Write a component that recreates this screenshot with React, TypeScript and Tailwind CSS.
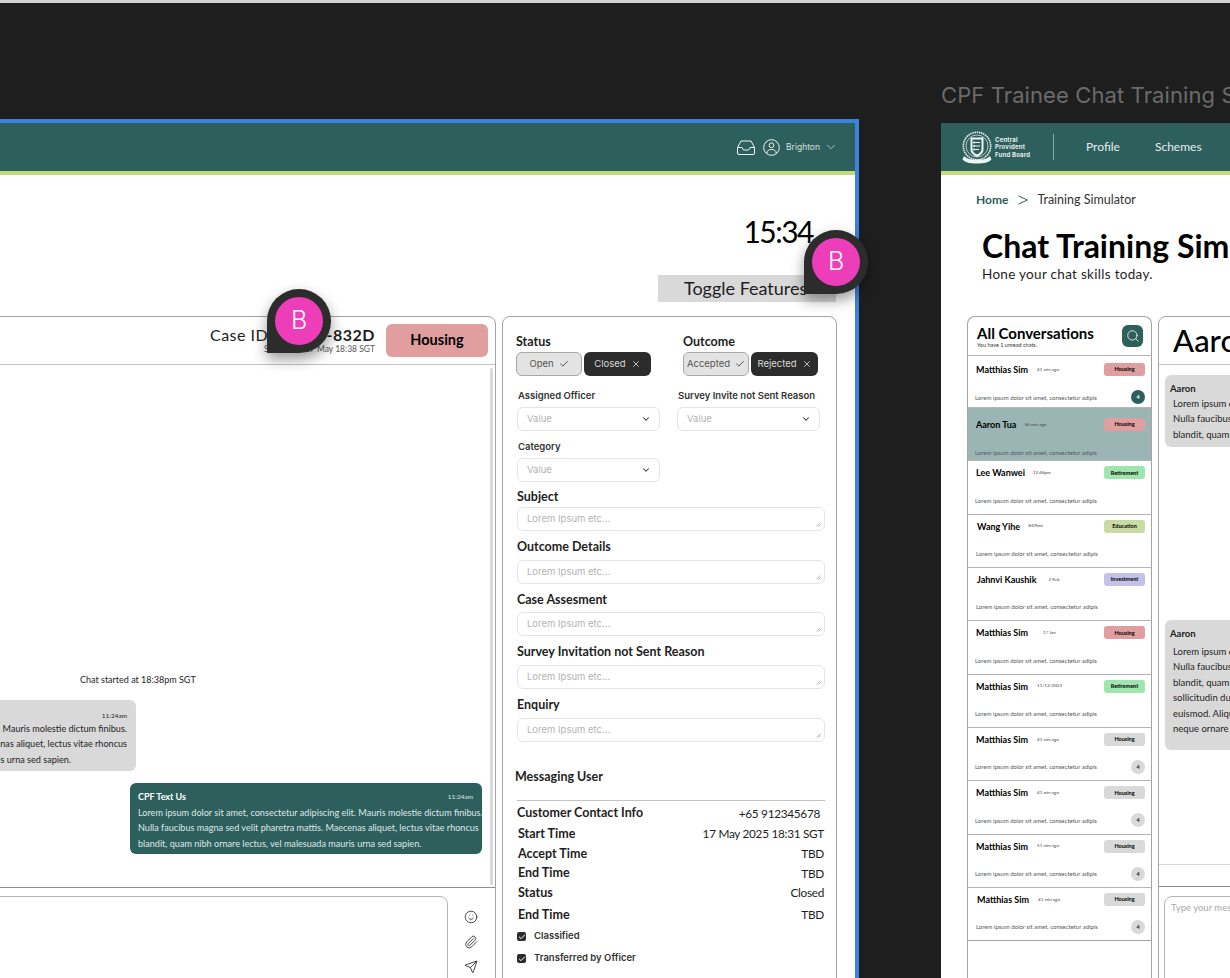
import { Check, ChevronDown, Paperclip, Search, Send, Smile, X } from "lucide-react";

const outfit = "font-['Lato','Inter',sans-serif]";
const inter = "font-['Inter',sans-serif]";

const lorem = "Lorem ipsum dolor sit amet, consectetur adipis";

const conversations = [
  { name: "Matthias Sim", time: "41 min ago", tag: "Housing", tagClass: "bg-[#e09e9e]", badge: "dark", gap: "ml-[9px]", row: "h-[52px] pt-[7px]" },
  { name: "Aaron Tua", time: "56 min ago", tag: "Housing", tagClass: "bg-[#e09e9e]", selected: true, gap: "ml-2", row: "h-[53.33px] pt-[10px]" },
  { name: "Lee Wanwei", time: "12:46pm", tag: "Retirement", tagClass: "bg-[#9ee6ae]", gap: "ml-2", row: "h-[53.33px] pt-[5px]" },
  { name: "Wang Yihe", time: "8:09am", tag: "Education", tagClass: "bg-[#c8dba3]", shift: true, gap: "ml-2", row: "h-[53.33px] pt-[5px]" },
  { name: "Jahnvi Kaushik", time: "2 Feb", tag: "Investment", tagClass: "bg-[#c3c0e9]", shift: true, gap: "ml-3", row: "h-[53.33px] pt-[5px]" },
  { name: "Matthias Sim", time: "17 Jan", tag: "Housing", tagClass: "bg-[#e09e9e]", gap: "ml-[15px]", row: "h-[53.33px] pt-[5px]" },
  { name: "Matthias Sim", time: "11/12/2023", tag: "Retirement", tagClass: "bg-[#9ee6ae]", gap: "ml-[9px]", row: "h-[53.33px] pt-[5px]" },
  { name: "Matthias Sim", time: "41 min ago", tag: "Housing", tagClass: "bg-[#d9d9d9]", badge: "gray", gap: "ml-[9px]", row: "h-[53.33px] pt-[5px]" },
  { name: "Matthias Sim", time: "41 min ago", tag: "Housing", tagClass: "bg-[#d9d9d9]", badge: "gray", gap: "ml-[9px]", row: "h-[53.33px] pt-[5px]" },
  { name: "Matthias Sim", time: "51 min ago", tag: "Housing", tagClass: "bg-[#d9d9d9]", badge: "gray", gap: "ml-[9px]", row: "h-[53.33px] pt-[5px]" },
  { name: "Matthias Sim", time: "41 min ago", tag: "Housing", tagClass: "bg-[#d9d9d9]", badge: "gray", shift: true, gap: "ml-[9px]", row: "h-[53.33px] pt-[5px]" },
];

const infoRows = [
  { label: "Start Time", value: "17 May 2025 18:31 SGT", h: "mt-px h-5" },
  { label: "Accept Time", value: "TBD", h: "h-5" },
  { label: "End Time", value: "TBD", h: "h-[19px]" },
  { label: "Status", value: "Closed", h: "h-5" },
  { label: "End Time", value: "TBD", h: "h-6" },
];

function Cursor({ className }: { className: string }) {
  return (
    <div className={`absolute z-10 flex h-16 w-16 items-center justify-center rounded-full rounded-bl-none bg-[#2c2c2c] shadow-[0_6px_14px_rgba(0,0,0,0.4)] ${className}`}>
      <div className={`flex h-12 w-12 items-center justify-center rounded-full bg-[#ee3db8] text-[25px] font-light text-white ${inter}`}>B</div>
    </div>
  );
}

function Inbox() {
  return (
    <svg width="18" height="15" viewBox="0 0 18 15" fill="none" stroke="#f2f6f5" strokeWidth="1">
      <path d="M4 1h10l3.500 6.500V13a1.500 1.500 0 0 1-1.500 1.500H2A1.500 1.500 0 0 1 .5 13V7.500z" />
      <path d="M.5 7.500h4.500l1.500 2.500h5l1.500-2.500h4.500" />
    </svg>
  );
}

function UserCircle() {
  return (
    <svg width="17" height="17" viewBox="0 0 17 17" fill="none" stroke="#f2f6f5" strokeWidth="1">
      <circle cx="8.500" cy="8.500" r="7.800" />
      <circle cx="8.500" cy="6.300" r="2.400" />
      <path d="M3.800 14.200c.2-2.600 1.900-3.700 4.700-3.700s4.500 1.100 4.700 3.700" />
    </svg>
  );
}

function Logo() {
  return (
    <svg width="30" height="33" viewBox="0 0 30 33" fill="none" stroke="#eef4f3">
      <circle cx="15" cy="15" r="13.700" strokeWidth="1.600" strokeDasharray="1.500 0.700" />
      <circle cx="15" cy="15" r="11" strokeWidth="0.700" />
      <path d="M8.500 6.500h13v12c0 4-3.500 6-6.500 7.500-3-1.500-6.500-3.500-6.500-7.500z" fill="#eef4f3" stroke="none" />
      <path d="M10.500 8.500h9v9.500c0 3-2.500 4.500-4.500 5.500-2-1-4.500-2.500-4.500-5.500z" fill="#2d5f5d" stroke="none" />
      <path d="M12 11.500h6M12 15h6M12 18.500h5" stroke="#eef4f3" strokeWidth="1" />
      <circle cx="12" cy="11.500" r="1" fill="#eef4f3" stroke="none" />
      <circle cx="12" cy="15" r="1" fill="#eef4f3" stroke="none" />
      <circle cx="12" cy="18.500" r="1" fill="#eef4f3" stroke="none" />
      <path d="M2 25c3 3 6 3.500 13 3.500S25 28 28 25l1.500 3.500c-3 3-7 4-14.500 4s-11.500-1-14.500-4z" fill="#eef4f3" stroke="none" />
    </svg>
  );
}

function Chip({ label, dark }: { label: string; dark?: boolean }) {
  return (
    <div className={`flex h-6 items-center justify-center gap-[5px] rounded-md text-[9.5px] ${inter} ${dark ? "w-[67px] bg-[#2c2c2c] text-[#d9d9d9]" : "w-[66px] border border-[#a8a8a8] bg-[#e3e3e3] text-[#555]"}`}>
      {label}
      {dark ? <X size={10} /> : <Check size={10} className="text-[#333]" />}
    </div>
  );
}

function SelectBox({ label }: { label: string }) {
  return (
    <div className="w-[143px]">
      <div className={`whitespace-nowrap pl-[1px] text-[9.500px] font-semibold leading-[13px] text-[#333] ${inter}`}>{label}</div>
      <div className={`mt-[5px] flex h-6 items-center justify-between rounded-md border border-[#e5e5e5] pl-[9px] pr-2 text-[9.5px] text-[#b3b3b3] ${inter}`}>
        Value
        <ChevronDown size={10} strokeWidth={2.5} className="text-[#333]" />
      </div>
    </div>
  );
}

function TextField({ label, outer, gap }: { label: string; outer: string; gap: string }) {
  return (
    <div className={outer}>
      <div className={`text-[12.5px] font-bold leading-4 text-[#1e1e1e] ${outfit}`}>{label}</div>
      <div className={`relative flex h-6 w-[308px] items-center rounded-md border border-[#e5e5e5] pl-[9px] text-[9.5px] text-[#b3b3b3] ${inter} ${gap}`}>
        Lorem Ipsum etc...
        <svg className="absolute bottom-[3px] right-[3px]" width="5" height="5" viewBox="0 0 5 5" stroke="#999" strokeWidth="0.700">
          <path d="M0.500 4.500 4.500 0.500M2.500 4.500 4.500 2.500" />
        </svg>
      </div>
    </div>
  );
}

function ChatPanel() {
  return (
    <div className="flex h-[700px] w-[726px] shrink-0 flex-col rounded-lg border border-[#a3a3a3]">
      <div className="flex h-12 shrink-0 items-center justify-end gap-[11px] border-b border-[#c4c4c4] pr-[7px]">
        <div className="text-right">
          <div className={`text-[16px] leading-[18px] tracking-[0.5px] text-[#1e1e1e] ${outfit}`}>
            Case ID: <span className="font-bold">T2504-832D</span>
          </div>
          <div className={`text-[8.5px] leading-[11px] text-[#555] ${outfit}`}>Started on 17 May 18:38 SGT</div>
        </div>
        <div className={`mb-px flex h-[33px] w-[102px] items-center justify-center rounded-md bg-[#e09e9e] text-[14.5px] font-bold text-black ${outfit}`}>Housing</div>
      </div>
      <div className="relative flex h-[522px] shrink-0 flex-col justify-end pb-[33px] pl-[13px] pr-[13px]">
        <div className="absolute bottom-[2px] right-[2px] top-[3px] w-[3px] rounded-sm bg-[#d9d9d9]" />
        <div className={`mb-[14px] ml-[296px] text-[9px] leading-3 text-[#1e1e1e] ${outfit}`}>Chat started at 18:38pm SGT</div>
        <div className={`flex h-[71px] w-[352px] flex-col items-end rounded-md bg-[#d9d9d9] pl-2 pr-[9px] pt-[12px] text-[#1e1e1e] ${outfit}`}>
          <div className="text-[6.5px] leading-[8px]">11:24am</div>
          <div className="mt-[1px] flex flex-col items-end whitespace-nowrap text-[9.1px] leading-[15.4px]">
            <div>Lorem ipsum dolor sit amet, consectetur adipiscing elit. Mauris molestie dictum finibus.</div>
            <div>Nulla faucibus magna sed velit pharetra mattis. Maecenas aliquet, lectus vitae rhoncus</div>
            <div className="pr-[56px]">blandit, quam nibh ornare lectus, vel malesuada mauris urna sed sapien.</div>
          </div>
        </div>
        <div className={`ml-[346px] mt-3 h-[71px] w-[352px] rounded-md bg-[#2d5f5d] px-2 pt-2 text-[#dfe8e7] ${outfit}`}>
          <div className="flex items-center justify-between pr-[1px]">
            <span className="text-[9px] font-bold leading-[12px] text-white">CPF Text Us</span>
            <span className="text-[6.5px] leading-[8px]">11:24am</span>
          </div>
          <div className="mt-[2px] whitespace-nowrap text-[9.1px] leading-[15.4px]">
            <div>Lorem ipsum dolor sit amet, consectetur adipiscing elit. Mauris molestie dictum finibus.</div>
            <div>Nulla faucibus magna sed velit pharetra mattis. Maecenas aliquet, lectus vitae rhoncus</div>
            <div>blandit, quam nibh ornare lectus, vel malesuada mauris urna sed sapien.</div>
          </div>
        </div>
      </div>
      <div className="flex flex-1 border-t border-[#8f8f8f] pl-[14px] pt-2">
        <div className="h-[120px] w-[663px] rounded-t-lg border border-[#b5b5b5]" />
        <div className="ml-4 flex flex-col items-center gap-[11px] pt-[14px] text-[#2c2c2c]">
          <Smile size={14} strokeWidth={1.4} />
          <Paperclip size={14} strokeWidth={1.5} />
          <Send size={14} strokeWidth={1.5} />
        </div>
      </div>
    </div>
  );
}

function DetailsPanel() {
  return (
    <div className="ml-[6px] h-[700px] w-[335px] shrink-0 rounded-lg border border-[#a3a3a3] pl-[13px] pt-[18px]">
      <div className="flex">
        <div className="w-[167px]">
          <div className={`text-[12.5px] font-bold leading-[14px] text-[#1e1e1e] ${outfit}`}>Status</div>
          <div className="mt-[3px] flex gap-[2px]"><Chip label="Open" /><Chip label="Closed" dark /></div>
        </div>
        <div>
          <div className={`text-[12.5px] font-bold leading-[14px] text-[#1e1e1e] ${outfit}`}>Outcome</div>
          <div className="mt-[3px] flex gap-[2px]"><Chip label="Accepted" /><Chip label="Rejected" dark /></div>
        </div>
      </div>
      <div className="ml-[1px] mt-[13px] flex gap-[17px]">
        <SelectBox label="Assigned Officer" />
        <SelectBox label="Survey Invite not Sent Reason" />
      </div>
      <div className="ml-[1px] mt-[9px]">
        <SelectBox label="Category" />
      </div>
      <div className="ml-[1px]">
        <TextField label="Subject" outer="mt-[7px]" gap="mt-[2px]" />
        <TextField label="Outcome Details" outer="mt-2" gap="mt-[5px]" />
        <TextField label="Case Assesment" outer="mt-2" gap="mt-1" />
        <TextField label="Survey Invitation not Sent Reason" outer="mt-2" gap="mt-[5px]" />
        <TextField label="Enquiry" outer="mt-2" gap="mt-[5px]" />
      </div>
      <div className={`-ml-px mt-7 text-[12.5px] font-bold leading-[14px] text-[#1e1e1e] ${outfit}`}>Messaging User</div>
      <div className="ml-[1px] mt-4 w-[308px] border-t border-[#c4c4c4] pt-[3px]">
        <div className={`flex h-[19px] items-center justify-between pr-[5px] text-[#1e1e1e] ${outfit}`}>
          <span className="text-[12.5px] font-bold">Customer Contact Info</span>
          <span className="text-[11.8px] tracking-[-0.3px]">+65 912345678</span>
        </div>
        {infoRows.map((row, i) => (
          <div key={i} className={`flex items-center justify-between pl-[1px] pr-px text-[#1e1e1e] ${row.h} ${outfit}`}>
            <span className="text-[12.5px] font-bold">{row.label}</span>
            <span className="text-[11.8px] tracking-[-0.3px]">{row.value}</span>
          </div>
        ))}
        <div className={`mt-[3px] flex flex-col gap-[9px] text-[9.5px] font-semibold text-[#333] ${inter}`}>
          {["Classified", "Transferred by Officer"].map((label) => (
            <div key={label} className="flex h-[13px] items-center gap-[8px]">
              <span className="flex h-[9px] w-[9px] items-center justify-center rounded-[2px] bg-[#2c2c2c]">
                <Check size={8} strokeWidth={3} className="text-white" />
              </span>
              {label}
            </div>
          ))}
        </div>
      </div>
    </div>
  );
}

function ConversationList() {
  return (
    <div className="h-[700px] w-[185px] shrink-0 rounded-t-lg border border-b-0 border-[#a3a3a3]">
      <div className="flex h-[38px] items-center justify-between pl-[9px] pr-2">
        <div>
          <div className={`text-[15px] font-bold leading-[17px] text-black ${outfit}`}>All Conversations</div>
          <div className={`text-[5.5px] leading-[6px] text-[#333] ${outfit}`}>You have 1 unread chats.</div>
        </div>
        <div className="flex h-[22px] w-[21px] items-center justify-center rounded-md bg-[#2d5f5d]">
          <Search size={14} strokeWidth={1.4} className="text-white" />
        </div>
      </div>
      {conversations.map((c, i) => (
        <div key={i} className={`border-t border-[#b5b5b5] pr-[6px] ${c.row} ${c.selected ? "bg-[#9ab5b3]" : ""} ${c.shift ? "pl-2" : "pl-[7px]"}`}>
          <div className="flex h-[27px] items-start justify-between">
            <div className={`flex items-center pl-[1px] pt-[1px] ${outfit}`}>
              <span className="text-[9px] font-bold leading-[12px] text-black">{c.name}</span>
              <span className={`text-[4.5px] text-[#444] ${c.gap}`}>{c.time}</span>
            </div>
            <div className={`flex h-[13px] w-[41px] items-center justify-center rounded-[3px] text-[5.5px] font-bold text-black ${c.tagClass} ${outfit}`}>{c.tag}</div>
          </div>
          <div className="flex h-[14px] items-center justify-between">
            <span className={`text-[6px] text-[#555] ${outfit}`}>{lorem}</span>
            {c.badge && (
              <span className={`flex h-[14px] w-[14px] items-center justify-center rounded-full text-[5.5px] font-bold ${c.badge === "dark" ? "bg-[#2d5f5d] text-white" : "bg-[#d9d9d9] text-[#222]"} ${outfit}`}>4</span>
            )}
          </div>
        </div>
      ))}
      <div className="h-px bg-[#a3a3a3]" />
    </div>
  );
}

function TraineeChat() {
  return (
    <div className="ml-[6px] flex h-[700px] w-[700px] shrink-0 flex-col rounded-lg border border-[#a3a3a3]">
      <div className={`flex h-12 shrink-0 items-center border-b border-[#c4c4c4] pl-[14px] text-[31px] font-medium text-black ${outfit}`}>Aaron Tua</div>
      <div className={`h-[500px] shrink-0 border-b border-[#d9d9d9] pl-[6px] pt-[10px] text-[9.5px] text-[#1e1e1e] ${outfit}`}>
        <div className="h-[72px] w-[400px] rounded-md bg-[#d9d9d9] pl-[5px] pt-[8px]">
          <div className="font-bold leading-[12px]">Aaron</div>
          <div className="mt-[1px] pl-[3px] leading-[15.4px]">
            <div>Lorem ipsum dolor sit amet, consectetur adipiscing elit.</div>
            <div>Nulla faucibus magna sed velit pharetra mattis.</div>
            <div>blandit, quam nibh ornare lectus, vel malesuada.</div>
          </div>
        </div>
        <div className="mt-[173px] h-[130px] w-[400px] rounded-md bg-[#d9d9d9] pl-[5px] pt-[8px]">
          <div className="font-bold leading-[12px]">Aaron</div>
          <div className="mt-[4px] pl-[3px] leading-[15.4px]">
            <div>Lorem ipsum dolor sit amet, consectetur adipiscing elit.</div>
            <div>Nulla faucibus magna sed velit pharetra mattis.</div>
            <div>blandit, quam nibh ornare lectus, vel malesuada.</div>
            <div>sollicitudin dui libero, vitae tempor nisl.</div>
            <div>euismod. Aliquam erat volutpat.</div>
            <div>neque ornare tellus sed sapien.</div>
          </div>
        </div>
      </div>
      <div className="h-[22px] shrink-0 border-b border-[#8f8f8f]" />
      <div className="pl-[5px] pt-[9px]">
        <div className={`h-[120px] w-[500px] rounded-t-lg border border-[#b5b5b5] pl-[6px] pt-[4px] text-[9.5px] text-[#aaa] ${outfit}`}>Type your message here...</div>
      </div>
    </div>
  );
}

export default function App() {
  return (
    <div className="relative h-[978px] w-[1230px] overflow-hidden bg-[#1e1e1e]">
      <div className="h-[3px] bg-[#d4d4d4]" />

      {/* left frame, selected on the canvas */}
      <div className="absolute left-[-255px] top-[119px] h-[900px] w-[1114px] border-[4px] border-b-0 border-[#3a82dc] bg-white">
        <div className="flex h-12 items-center justify-end bg-[#2d5f5d] pr-[17px]">
          <Inbox />
          <div className="ml-2"><UserCircle /></div>
          <span className={`ml-[6px] text-[8.5px] text-[#d5e0df] ${inter}`}>Brighton</span>
          <ChevronDown size={14} strokeWidth={1.3} className="ml-1 text-[#d5e0df]" />
        </div>
        <div className="h-1 bg-[#bfd97c]" />
        <div className="flex flex-col items-end pr-[19px]">
          <div className={`mr-[23px] mt-[38px] text-[30px] leading-9 tracking-[-1.5px] text-black ${outfit}`}>15:34</div>
          <div className={`mt-[26px] flex h-[27px] w-[178px] items-center bg-[#d9d9d9] pl-[26px] text-[18px] text-[#1e1e1e] ${outfit}`}>Toggle Features</div>
        </div>
        <div className="ml-[21px] mt-[14px] flex">
          <ChatPanel />
          <DetailsPanel />
        </div>
      </div>
      <Cursor className="left-[267px] top-[289px]" />
      <Cursor className="left-[804px] top-[230px]" />

      {/* right frame */}
      <div className={`absolute left-[941px] top-[79px] whitespace-nowrap text-[22px] tracking-[0.1px] text-[#6b6b6b] ${inter}`}>CPF Trainee Chat Training Simulator</div>
      <div className="absolute left-[941px] top-[123px] h-[860px] w-[900px] bg-white">
        <div className="flex h-12 items-center bg-[#2d5f5d] pl-[21px]">
          <Logo />
          <div className={`ml-[3px] w-[35px] whitespace-nowrap text-[6px] font-bold leading-[7.600px] tracking-[0.2px] text-[#e6eeed] ${inter}`}>
            <div>Central</div>
            <div>Provident</div>
            <div>Fund Board</div>
          </div>
          <div className="ml-[23px] h-[26px] w-px bg-[#8aa8a6]" />
          <span className={`ml-8 text-[12px] text-[#e6eeed] ${outfit}`}>Profile</span>
          <span className={`ml-[35px] text-[12px] text-[#e6eeed] ${outfit}`}>Schemes</span>
        </div>
        <div className="h-1 bg-[#c5dc80]" />
        <div className={`ml-[35px] mt-[17px] flex h-[16px] items-center text-[12px] ${outfit}`}>
          <span className="font-bold text-[#2d5f5d]">Home</span>
          <svg className="ml-[10px]" width="10" height="10" viewBox="0 0 10 10" fill="none" stroke="#2d5f5d" strokeWidth="1">
            <path d="M0.500 1 9.500 5 0.500 9" />
          </svg>
          <span className="ml-[9px] text-[12.5px] text-[#333]">Training Simulator</span>
        </div>
        <div className={`ml-[41px] mt-5 whitespace-nowrap text-[32px] font-bold leading-9 text-black ${outfit}`}>Chat Training Simulator</div>
        <div className={`ml-[41px] mt-[2px] text-[13.5px] leading-[16px] tracking-[0.3px] text-[#1e1e1e] ${outfit}`}>Hone your chat skills today.</div>
        <div className="ml-[26px] mt-[34px] flex">
          <ConversationList />
          <TraineeChat />
        </div>
      </div>
    </div>
  );
}
